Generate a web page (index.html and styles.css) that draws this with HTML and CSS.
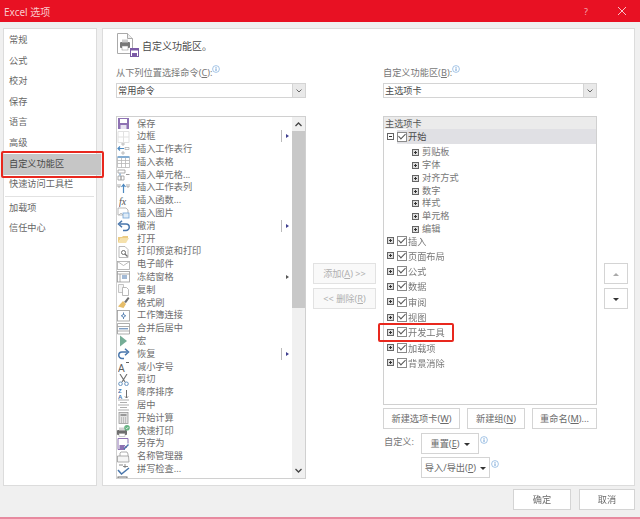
FILE: index.html
```html
<!DOCTYPE html>
<html lang="zh-CN">
<head>
    <meta charset="UTF-8">
    <title>Excel 选项</title>
    <link rel="stylesheet" href="styles.css">
</head>
<body>
    <svg class="defs" width="0" height="0">
        <symbol id="info" viewBox="0 0 8 8">
            <circle cx="4" cy="4" r="3.4" fill="#fff" stroke="#8db6e0" stroke-width=".8"/>
            <path d="M4 3.4v2.6M4 2v.8" stroke="#5b93cf" stroke-width=".9"/>
        </symbol>
    </svg>

    <div class="titlebar">
        <span class="title">Excel 选项</span>
        <span class="help">?</span>
        <svg class="close" width="10" height="10" viewBox="0 0 10 10"><path d="M1 1l8 8M9 1l-8 8" stroke="#f7c3c8" stroke-width="1"/></svg>
    </div>

    <div class="main">
        <div class="nav">
            <div class="nav-item">常规</div>
            <div class="nav-item">公式</div>
            <div class="nav-item">校对</div>
            <div class="nav-item">保存</div>
            <div class="nav-item">语言</div>
            <div class="nav-item">高级</div>
            <div class="nav-item selected">自定义功能区</div>
            <div class="nav-item">快速访问工具栏</div>
            <div class="nav-divider"></div>
            <div class="nav-item">加载项</div>
            <div class="nav-item">信任中心</div>
        </div>

        <div class="panel">
            <div class="panel-head">
                <svg width="24" height="25" viewBox="0 0 24 25">
                    <path d="M1.500 .5h10l5 5v15h-15z" fill="#fff" stroke="#aaa"/>
                    <path d="M11.500 .5v5h5" fill="#eee" stroke="#aaa"/>
                    <rect x="4" y="9" width="10" height="6" rx="1" fill="#777"/>
                    <rect x="6" y="6.500" width="6" height="3" fill="#ccc"/>
                    <rect x="6" y="13" width="6" height="4" fill="#fff" stroke="#888" stroke-width=".5"/>
                    <rect x="14.500" y="15.500" width="8" height="8" fill="#fff" stroke="#7b5aa6"/>
                    <rect x="16" y="20" width="5" height="3.500" fill="#7b5aa6"/>
                    <rect x="15" y="16" width="7" height="1.500" fill="#7b5aa6"/>
                </svg>
                <span class="panel-title">自定义功能区。</span>
            </div>

            <div class="columns">
                <div class="col-left">
                    <div class="field-label">从下列位置选择命令(<u>C</u>):<svg class="info"><use href="#info"/></svg></div>
                    <div class="combo">常用命令<span class="combo-btn"><svg width="6" height="4" viewBox="0 0 6 4"><path d="M.5.5L3 3 5.500.5" fill="none" stroke="#666"/></svg></span></div>

                    <div class="cmd-list">
                        <div class="cmd-rows">
                            <div class="cmd"><svg class="ico" viewBox="0 0 13 12"><rect x="1" y="0" width="11" height="11" fill="#7b5aa6"/><rect x="3" y="1" width="7" height="4" fill="#fff"/><rect x="3.500" y="7" width="6" height="4" fill="#e6e0f0"/></svg><span>保存</span></div>
                            <div class="cmd"><svg class="ico" viewBox="0 0 13 12"><path d="M1 .5h11v11H1zM6.500 .5v11M1 6h11" fill="none" stroke="#ddd"/></svg><span>边框</span><i class="sub sep"></i></div>
                            <div class="cmd"><svg class="ico" viewBox="0 0 13 12"><path d="M5 0h2v2H5zM5 9h2v2H5z" fill="none" stroke="#999" stroke-width=".7"/><path d="M1 5.500h6M3 3.500L1 5.500l2 2" fill="none" stroke="#2e75b6" stroke-width="1.200"/><path d="M8 4.500h4v2H8z" fill="none" stroke="#999" stroke-width=".7"/></svg><span>插入工作表行</span></div>
                            <div class="cmd"><svg class="ico" viewBox="0 0 13 12"><path d="M.5 1.500h12v10H.5zM.5 4.500h12M.5 7.500h12M4.500 1.500v10M8.500 1.500v10" fill="none" stroke="#aaa" stroke-width=".8"/><path d="M.5 0h12v2H.5z" fill="#6f9fcb"/></svg><span>插入表格</span></div>
                            <div class="cmd"><svg class="ico" viewBox="0 0 13 12"><path d="M1 1h7v3H1zM1 7h3v4H1zM4 7h3v4H4z" fill="#fff" stroke="#888" stroke-width=".8"/><path d="M9 5.500h3.500" stroke="#888"/><path d="M3 4.500v2" stroke="#2e75b6"/></svg><span>插入单元格...</span></div>
                            <div class="cmd"><svg class="ico" viewBox="0 0 13 12"><path d="M1 2v3h2V2M10 2v3h2V2" fill="none" stroke="#888" stroke-width=".8"/><path d="M6.500 11V3M4.500 5l2-2.500L8.500 5" fill="none" stroke="#2e75b6" stroke-width="1.200"/></svg><span>插入工作表列</span></div>
                            <div class="cmd"><svg class="ico" viewBox="0 0 13 12"><text class="ico-fx" x="2" y="10">fx</text></svg><span>插入函数...</span></div>
                            <div class="cmd"><svg class="ico" viewBox="0 0 13 12"><path d="M1 1h8l2 2v5H1z" fill="#fff" stroke="#999" stroke-width=".8"/><rect x="6" y="6" width="6" height="5" fill="#dbe9f6" stroke="#5b93cf" stroke-width=".8"/><path d="M2 8l2-2 2 2" fill="none" stroke="#999" stroke-width=".7"/></svg><span>插入图片</span></div>
                            <div class="cmd"><svg class="ico" viewBox="0 0 13 12"><path d="M3 4h6a2.800 2.800 0 0 1 0 6.500H6" fill="none" stroke="#2a5f9e" stroke-width="1.500"/><path d="M5 .8L1.500 4 5 7.200" fill="none" stroke="#2a5f9e" stroke-width="1.500"/></svg><span>撤消</span><i class="sub sep"></i></div>
                            <div class="cmd"><svg class="ico" viewBox="0 0 13 12"><path d="M1 10V4h4l1-1h5v2H4z" fill="#e9c46f"/><path d="M1 10l3-5h8l-3 5z" fill="#f4dc9e"/></svg><span>打开</span></div>
                            <div class="cmd"><svg class="ico" viewBox="0 0 13 12"><path d="M2 .5h6l3 3v8H2z" fill="#fff" stroke="#999" stroke-width=".8"/><circle cx="6.500" cy="6.500" r="2" fill="none" stroke="#555"/><path d="M8 8l2.500 2.500" stroke="#555" stroke-width="1.200"/></svg><span>打印预览和打印</span></div>
                            <div class="cmd"><svg class="ico" viewBox="0 0 13 12"><rect x=".5" y="2.500" width="12" height="8" fill="#fff" stroke="#999" stroke-width=".8"/><path d="M.5 2.500l6 4 6-4" fill="none" stroke="#999" stroke-width=".8"/></svg><span>电子邮件</span></div>
                            <div class="cmd"><svg class="ico" viewBox="0 0 13 12"><rect x=".5" y=".5" width="12" height="10.500" fill="#fff" stroke="#888" stroke-width=".8"/><path d="M.5 3h12M3 3v8" stroke="#888" stroke-width=".8"/><path d="M5 5h5M5 7h5" stroke="#2a5f9e"/></svg><span>冻结窗格</span><i class="sub"></i></div>
                            <div class="cmd"><svg class="ico" viewBox="0 0 13 12"><path d="M1.500 .5h5v8h-5z" fill="#f4f4f4" stroke="#aaa" stroke-width=".8"/><path d="M5.500 3.500h4l2 2v6h-6z" fill="#fff" stroke="#999" stroke-width=".8"/></svg><span>复制</span></div>
                            <div class="cmd"><svg class="ico" viewBox="0 0 13 12"><path d="M7 5l4-5 1.500 1.200L9 6z" fill="#555"/><path d="M1 9.500L6 4l3 3-2.500 4z" fill="#e2b24f"/></svg><span>格式刷</span></div>
                            <div class="cmd"><svg class="ico" viewBox="0 0 13 12"><rect x=".5" y=".5" width="12" height="10.500" fill="#fff" stroke="#888" stroke-width=".8"/><path d="M6.500 2.500v6.500M4 5.800h5" stroke="#2a5f9e" stroke-width=".9"/><circle cx="6.500" cy="5.800" r="1.400" fill="#fff" stroke="#2a5f9e" stroke-width=".8"/></svg><span>工作簿连接</span></div>
                            <div class="cmd"><svg class="ico" viewBox="0 0 13 12"><path d="M.5 .5h12v10.500H.5zM.5 3.500h12M.5 8h12" fill="none" stroke="#888" stroke-width=".8"/><path d="M2 5.800h9" stroke="#2a5f9e"/></svg><span>合并后居中</span></div>
                            <div class="cmd"><svg class="ico" viewBox="0 0 13 12"><path d="M3 .5L10 6l-7 5.500z" fill="#5e9f86"/></svg><span>宏</span></div>
                            <div class="cmd"><svg class="ico" viewBox="0 0 13 12"><path d="M10 4H5a2.800 2.800 0 0 0 0 6.500h2" fill="none" stroke="#2a5f9e" stroke-width="1.500"/><path d="M8 .8L11.500 4 8 7.200" fill="none" stroke="#2a5f9e" stroke-width="1.500"/></svg><span>恢复</span><i class="sub sep"></i></div>
                            <div class="cmd"><svg class="ico" viewBox="0 0 13 12"><text class="ico-a" x="1" y="11">A</text><path d="M9 1.500h3" stroke="#444"/></svg><span>减小字号</span></div>
                            <div class="cmd"><svg class="ico" viewBox="0 0 13 12"><path d="M3 0l5 8M10 0L5 8" stroke="#555" stroke-width="1.100"/><circle cx="3.500" cy="9.800" r="1.800" fill="none" stroke="#4a7fb5"/><circle cx="9.500" cy="9.800" r="1.800" fill="none" stroke="#4a7fb5"/></svg><span>剪切</span></div>
                            <div class="cmd"><svg class="ico" viewBox="0 0 13 12"><text class="ico-sort" x="1" y="5.500">Z</text><text class="ico-sort" x="1" y="12">A</text><path d="M9.500 3v8M8 9.500l1.500 1.500L11 9.500" fill="none" stroke="#555"/></svg><span>降序排序</span></div>
                            <div class="cmd"><svg class="ico" viewBox="0 0 13 12"><path d="M1 1h11M3 3.500h7M1 6h11M3 8.500h7M1 11h11" stroke="#888" stroke-width=".8"/></svg><span>居中</span></div>
                            <div class="cmd"><svg class="ico" viewBox="0 0 13 12"><rect x="2" y=".5" width="9" height="11" fill="#ddd" stroke="#888" stroke-width=".8"/><rect x="3.500" y="2" width="6" height="2" fill="#888"/><path d="M4 6h5M4 8h5M4 10h5" stroke="#888" stroke-dasharray="1 1"/></svg><span>开始计算</span></div>
                            <div class="cmd"><svg class="ico" viewBox="0 0 13 12"><rect x="0" y="5" width="10" height="5" rx="1" fill="#555"/><rect x="2" y="2.500" width="6" height="3" fill="#ccc"/><rect x="2" y="8.500" width="6" height="3" fill="#fff" stroke="#888" stroke-width=".5"/><circle cx="10" cy="2.800" r="2.800" fill="#4ea76f"/><path d="M8.700 2.800l1 1 1.600-1.800" fill="none" stroke="#fff" stroke-width=".8"/></svg><span>快速打印</span></div>
                            <div class="cmd"><svg class="ico" viewBox="0 0 13 12"><path d="M1 .5h10v5" fill="none" stroke="#7b5aa6"/><path d="M1 .5v11h7" fill="none" stroke="#7b5aa6"/><rect x="2.500" y="7" width="5" height="4" fill="#7b5aa6"/><path d="M7 11l4.500-4.500" stroke="#2a5f9e" stroke-width="1.400"/><path d="M7 7l3 3" stroke="#7b5aa6"/></svg><span>另存为</span></div>
                            <div class="cmd"><svg class="ico" viewBox="0 0 13 12"><path d="M3 2l1-1h6l1 2v3H3z" fill="#fff" stroke="#888" stroke-width=".8"/><path d="M.5 5h11l.5 6H.5z" fill="#f4f4f4" stroke="#888" stroke-width=".8"/></svg><span>名称管理器</span></div>
                            <div class="cmd"><svg class="ico" viewBox="0 0 13 12"><path d="M2 2h4M8 1v4M6 3.500h5" stroke="#555" stroke-width=".8"/><path d="M1 7l3.500 4L12 5" fill="none" stroke="#2a5f9e" stroke-width="1.500"/></svg><span>拼写检查...</span></div>
                            <div class="cmd"><svg class="ico" viewBox="0 0 13 12"><rect x="1" y="1" width="9" height="10" fill="#fff" stroke="#555"/></svg><span></span></div>
                        </div>
                        <div class="scrollbar">
                            <svg class="scroll-arrow" width="13" height="14" viewBox="0 0 13 14"><path d="M3.500 9l3-3 3 3" fill="none" stroke="#444" stroke-width="1.300"/></svg>
                            <div class="scroll-thumb"></div>
                            <svg class="scroll-arrow end" width="13" height="14" viewBox="0 0 13 14"><path d="M3.500 5l3 3 3-3" fill="none" stroke="#444" stroke-width="1.300"/></svg>
                        </div>
                    </div>
                </div>

                <div class="col-mid">
                    <div class="btn off">添加(<u>A</u>) &gt;&gt;</div>
                    <div class="btn off">&lt;&lt; 删除(<u>R</u>)</div>
                </div>

                <div class="col-tree">
                    <div class="field-label">自定义功能区(<u>B</u>):<svg class="info"><use href="#info"/></svg></div>
                    <div class="combo">主选项卡<span class="combo-btn"><svg width="6" height="4" viewBox="0 0 6 4"><path d="M.5.5L3 3 5.500.5" fill="none" stroke="#666"/></svg></span></div>

                    <div class="tree">
                        <div class="tree-head">主选项卡</div>
                        <div class="tab-row open"><i class="exp minus"></i><i class="check"></i><span class="tab-name">开始</span></div>
                        <div class="groups">
                            <div class="group"><i class="exp"></i>剪贴板</div>
                            <div class="group"><i class="exp"></i>字体</div>
                            <div class="group"><i class="exp"></i>对齐方式</div>
                            <div class="group"><i class="exp"></i>数字</div>
                            <div class="group"><i class="exp"></i>样式</div>
                            <div class="group"><i class="exp"></i>单元格</div>
                            <div class="group"><i class="exp"></i>编辑</div>
                        </div>
                        <div class="tab-row"><i class="exp"></i><i class="check"></i><span class="tab-name">插入</span></div>
                        <div class="tab-row"><i class="exp"></i><i class="check"></i><span class="tab-name">页面布局</span></div>
                        <div class="tab-row"><i class="exp"></i><i class="check"></i><span class="tab-name">公式</span></div>
                        <div class="tab-row"><i class="exp"></i><i class="check"></i><span class="tab-name">数据</span></div>
                        <div class="tab-row"><i class="exp"></i><i class="check"></i><span class="tab-name">审阅</span></div>
                        <div class="tab-row"><i class="exp"></i><i class="check"></i><span class="tab-name">视图</span></div>
                        <div class="tab-row marked"><i class="exp"></i><i class="check"></i><span class="tab-name">开发工具</span></div>
                        <div class="tab-row"><i class="exp"></i><i class="check"></i><span class="tab-name">加载项</span></div>
                        <div class="tab-row"><i class="exp"></i><i class="check"></i><span class="tab-name">背景消除</span></div>
                    </div>

                    <div class="tree-actions">
                        <div class="btn new-tab">新建选项卡(<u>W</u>)</div>
                        <div class="btn new-group">新建组(<u>N</u>)</div>
                        <div class="btn rename">重命名(<u>M</u>)...</div>
                    </div>

                    <div class="custom-row">
                        <span class="custom-label">自定义:</span>
                        <div class="custom-btns">
                            <div class="custom-line"><div class="btn reset">重置(<u>E</u>)<i class="caret"></i></div><svg class="info"><use href="#info"/></svg></div>
                            <div class="custom-line"><div class="btn export">导入/导出(<u>P</u>)<i class="caret"></i></div><svg class="info"><use href="#info"/></svg></div>
                        </div>
                    </div>
                </div>

                <div class="col-move">
                    <div class="btn move"><i class="caret up off"></i></div>
                    <div class="btn move"><i class="caret"></i></div>
                </div>
            </div>
        </div>
    </div>

    <div class="footer">
        <div class="btn ok">确定</div>
        <div class="btn cancel">取消</div>
    </div>
</body>
</html>
```

FILE: styles.css
```css
html, body {
    margin: 0;
    height: 519px;
    overflow: hidden;
}

body {
    font-family: "Noto Sans", "Noto Sans CJK SC", sans-serif;
    font-size: 9.2px;
    color: #666;
    background: #f0f0f0;
    box-sizing: border-box;
    border-bottom: 2px solid #e88aa0;
    filter: blur(.3px);
}

.defs {
    display: block;
    height: 0;
}

u {
    text-decoration-thickness: 1px;
}

i {
    font-style: normal;
}

/* title bar */
.titlebar {
    height: 22px;
    background: #e81123;
    display: flex;
    align-items: center;
    padding: 0 13px 0 4px;
}

.title {
    flex: 1;
    font-size: 10px;
    color: #f9c9cd;
}

.help {
    font-size: 9px;
    color: #f5a8af;
    margin-right: 29px;
}

/* main area */
.main {
    display: flex;
    gap: 5px;
    height: 458px;
    margin-top: 6px;
    padding: 0 5px 0 3px;
}

.nav {
    width: 92px;
    background: #fff;
    border: 1px solid #dcdcdc;
    padding-top: 1px;
    flex: none;
}

.nav-item {
    height: 20.6px;
    line-height: 20.6px;
    padding-left: 5px;
}

.nav-item.selected {
    position: relative;
    width: 92px;
    margin-left: -1px;
    padding-left: 6px;
    background: #c6c6c6;
    color: #4a4a4a;
    top: .5px;
}

.nav-item.selected::after {
    content: "";
    position: absolute;
    left: -2px;
    right: -3px;
    top: -3px;
    bottom: -3px;
    border: 2px solid #e8281e;
    border-radius: 2px;
}

.nav-divider {
    height: 1px;
    background: #e2e2e2;
    margin: 1px 2px 1px 1px;
}

.panel {
    flex: 1;
    background: #fff;
    border: 1px solid #dcdcdc;
    padding-left: 13px;
}

.panel-head {
    height: 33px;
    padding-bottom: 2px;
    display: flex;
    align-items: center;
    gap: 2px;
}

.panel-title {
    font-size: 10px;
    color: #4a4a4a;
}

.columns {
    display: flex;
    gap: 7px;
}

.col-left {
    width: 190px;
}

.col-mid {
    width: 63px;
    padding-top: 199px;
}

.col-tree {
    width: 214px;
}

.col-move {
    width: 24px;
    padding-top: 199px;
}

.field-label {
    height: 17px;
    line-height: 17px;
    color: #777;
    white-space: nowrap;
}

.info {
    width: 8px;
    height: 8px;
    vertical-align: 3px;
}

.combo {
    height: 15px;
    line-height: 13px;
    margin: 2px 0 18px;
    box-sizing: border-box;
    border: 1px solid #d4d4d4;
    padding-left: 1px;
    color: #4a4a4a;
    display: flex;
    justify-content: space-between;
}

.combo-btn {
    width: 12px;
    background: #e9e9e9;
    border-left: 1px solid #d4d4d4;
    display: flex;
    align-items: center;
    justify-content: center;
}

/* command list */
.cmd-list {
    height: 363px;
    box-sizing: border-box;
    border: 1px solid #d0d0d0;
    display: flex;
    overflow: hidden;
}

.cmd-rows {
    flex: 1;
    padding-top: .5px;
}

.cmd {
    height: 12.8px;
    line-height: 12.8px;
    display: flex;
    align-items: center;
    position: relative;
    color: #6e6e6e;
    white-space: nowrap;
}

.ico {
    width: 13px;
    height: 12px;
    flex: none;
    margin-right: 7px;
    opacity: .85;
}

.ico-fx {
    font-family: "Liberation Serif", serif;
    font-style: italic;
    font-size: 10px;
    fill: #333;
}

.ico-a {
    font-family: "Liberation Sans", sans-serif;
    font-size: 10px;
    fill: #444;
}

.ico-sort {
    font-family: "Liberation Sans", sans-serif;
    font-size: 6px;
    font-weight: bold;
    fill: #2a5f9e;
}

.sub {
    position: absolute;
    right: 3px;
    top: 4px;
    border-left: 3px solid #555;
    border-top: 2.500px solid transparent;
    border-bottom: 2.500px solid transparent;
}

.sub.sep {
    border-left-color: #3f3f8f;
}

.sub.sep::before {
    content: "";
    position: absolute;
    left: -8px;
    top: -6px;
    width: 1px;
    height: 12px;
    background: #bbb;
}

.scrollbar {
    width: 13px;
    background: #f0f0f0;
    display: flex;
    flex-direction: column;
    flex: none;
}

.scroll-arrow {
    display: block;
    flex: none;
}

.scroll-arrow.end {
    margin-top: auto;
}

.scroll-thumb {
    height: 177px;
    background: #c8c8c8;
}

/* buttons */
.btn {
    height: 21px;
    line-height: 19px;
    box-sizing: border-box;
    border: 1px solid #d4d4d4;
    background: #fff;
    text-align: center;
    white-space: nowrap;
    color: #6a6a6a;
}

.col-mid .btn, .col-move .btn {
    margin-bottom: 4px;
}

.btn.off {
    background: #f9f9f9;
    border-color: #e2e2e2;
    color: #b0b0b0;
}

.caret {
    display: inline-block;
    vertical-align: 1px;
    margin-left: 4px;
    border-top: 3px solid #333;
    border-left: 3px solid transparent;
    border-right: 3px solid transparent;
}

.caret.up {
    border-top: 0;
    border-bottom: 3px solid #333;
}

.caret.up.off {
    border-bottom-color: #aaa;
}

.move .caret {
    margin-left: 0;
}

/* ribbon tree */
.tree {
    height: 289px;
    box-sizing: border-box;
    border: 1px solid #d0d0d0;
}

.tree-head {
    height: 12px;
    line-height: 13px;
    background: #ebebeb;
    padding-left: 1px;
    color: #555;
}

.tab-row {
    height: 15.3px;
    display: flex;
    align-items: center;
    padding-left: 3px;
    position: relative;
    color: #777;
}

.tab-row.open {
    color: #4a4a4a;
}

.tab-row.open .tab-name {
    flex: 1;
    height: 100%;
    line-height: 15.3px;
    background: #e0e0e4;
    margin-left: 0;
    padding-left: 1px;
}

.tab-row.open .check {
    outline: 2px solid #e0e0e4;
    outline-offset: 0;
    clip-path: inset(-2px 0 -2px 0);
}

.tab-row.marked::after {
    content: "";
    position: absolute;
    left: -6px;
    top: -1.500px;
    width: 72px;
    height: 15px;
    border: 2px solid #e8281e;
    border-radius: 2px;
}

.exp {
    width: 7px;
    height: 7px;
    box-sizing: border-box;
    border: 1px solid #666;
    flex: none;
    background:
        linear-gradient(#333, #333) center / 3px 1px no-repeat,
        linear-gradient(#333, #333) center / 1px 3px no-repeat,
        #ddd;
}

.exp.minus {
    background: linear-gradient(#333, #333) center / 3px 1px no-repeat, #fff;
}

.check {
    width: 10px;
    height: 10px;
    box-sizing: border-box;
    border: 1px solid #8a8a8a;
    margin-left: 3px;
    flex: none;
    position: relative;
    background: #fff;
}

.check::after {
    content: "";
    position: absolute;
    left: 2px;
    top: -1px;
    width: 3px;
    height: 6px;
    border-right: 1px solid #555;
    border-bottom: 1px solid #555;
    transform: rotate(45deg);
}

.tab-name {
    margin-left: 1px;
}

.groups {
    padding-top: 2px;
    margin-bottom: -3px;
}

.group {
    height: 12.8px;
    line-height: 12.8px;
    display: flex;
    align-items: center;
    padding-left: 28px;
    color: #777;
}

.group .exp {
    margin-right: 3px;
}

.tree-actions {
    display: flex;
    gap: 7px;
    margin-top: 3px;
}

.new-tab {
    width: 77px;
}

.new-group {
    width: 58px;
}

.rename {
    width: 65px;
}

.custom-row {
    display: flex;
    margin-top: 4px;
}

.custom-label {
    width: 38px;
    line-height: 18px;
    padding: 0 0 0 1px;
    box-sizing: border-box;
    color: #777;
}

.custom-line {
    display: flex;
    align-items: flex-start;
    gap: 1px;
    margin-bottom: 3px;
}

.custom-line .info {
    margin-top: 3px;
}

.reset {
    width: 58px;
}

.export {
    width: 69px;
}

/* bottom buttons */
.footer {
    display: flex;
    justify-content: flex-end;
    gap: 8px;
    padding: 3px 5px 0 0;
}

.ok {
    width: 58px;
}

.cancel {
    width: 56px;
}
```
